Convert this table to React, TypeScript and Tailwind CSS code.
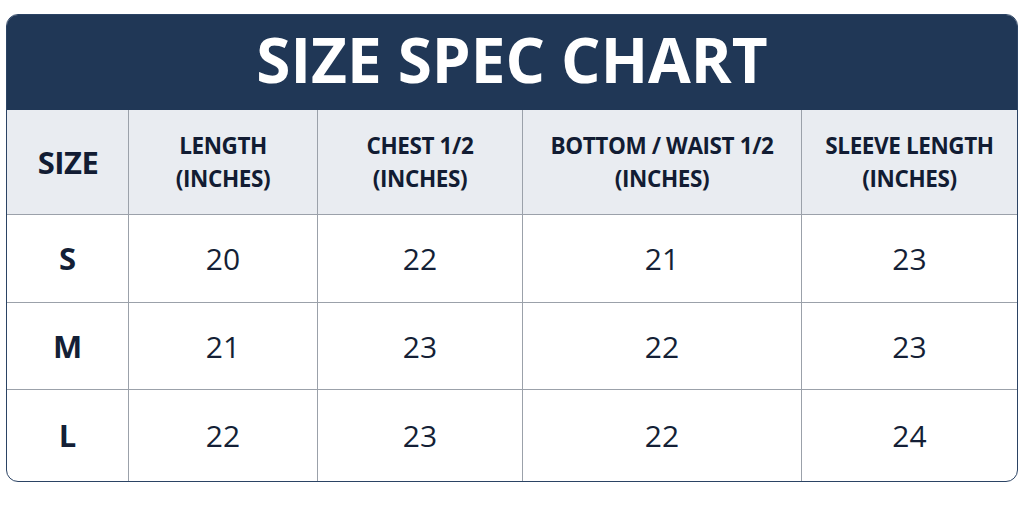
import React from "react";

const cols = "grid-cols-[121px_189px_205px_279px_1fr]";

const headers = [
  ["LENGTH", "(INCHES)"],
  ["CHEST 1/2", "(INCHES)"],
  ["BOTTOM / WAIST 1/2", "(INCHES)"],
  ["SLEEVE LENGTH", "(INCHES)"],
];

const rows: [string, string[], string][] = [
  ["S", ["20", "22", "21", "23"], "h-[88px]"],
  ["M", ["21", "23", "22", "23"], "h-[87px]"],
  ["L", ["22", "23", "22", "24"], "flex-1"],
];

export default function App() {
  return (
    <div
      className="w-[1024px] h-[512px] bg-white pt-[14px] px-[6px]"
      style={{ fontFamily: '"Open Sans", "Noto Sans", sans-serif' }}
    >
      <div className="w-[1012px] h-[468px] border-[1.5px] border-[#2b4364] rounded-[12px] overflow-hidden flex flex-col">
        <div className="h-[95px] bg-[#203756] flex items-center justify-center">
          <h1 className="text-white font-bold text-[62px] leading-none pb-[8px]">
            SIZE SPEC CHART
          </h1>
        </div>
        <div className={`grid ${cols} h-[104px] bg-[#e9ecf1] text-[#121c33] font-bold`}>
          <div className="flex items-center justify-center text-[31px] tracking-[-0.5px] pl-[1px]">SIZE</div>
          {headers.map((h, i) => (
            <div
              key={i}
              className="border-l-[1.5px] border-[#9ba1aa] flex flex-col items-center justify-center text-[22.5px] leading-[33px] tracking-[-0.4px]"
            >
              <span>{h[0]}</span>
              <span>{h[1]}</span>
            </div>
          ))}
        </div>
        {rows.map(([s, vals, h], ri) => (
          <div
            key={ri}
            className={`grid ${cols} ${h} border-t-[1.5px] border-[#9ba1aa] text-[#141f36]`}
          >
            <div className="flex items-center justify-center font-bold text-[31px]">{s}</div>
            {vals.map((v, i) => (
              <div
                key={i}
                className="border-l-[1.5px] border-[#9ba1aa] flex items-center justify-center text-[30px]"
              >
                {v}
              </div>
            ))}
          </div>
        ))}
      </div>
    </div>
  );
}
